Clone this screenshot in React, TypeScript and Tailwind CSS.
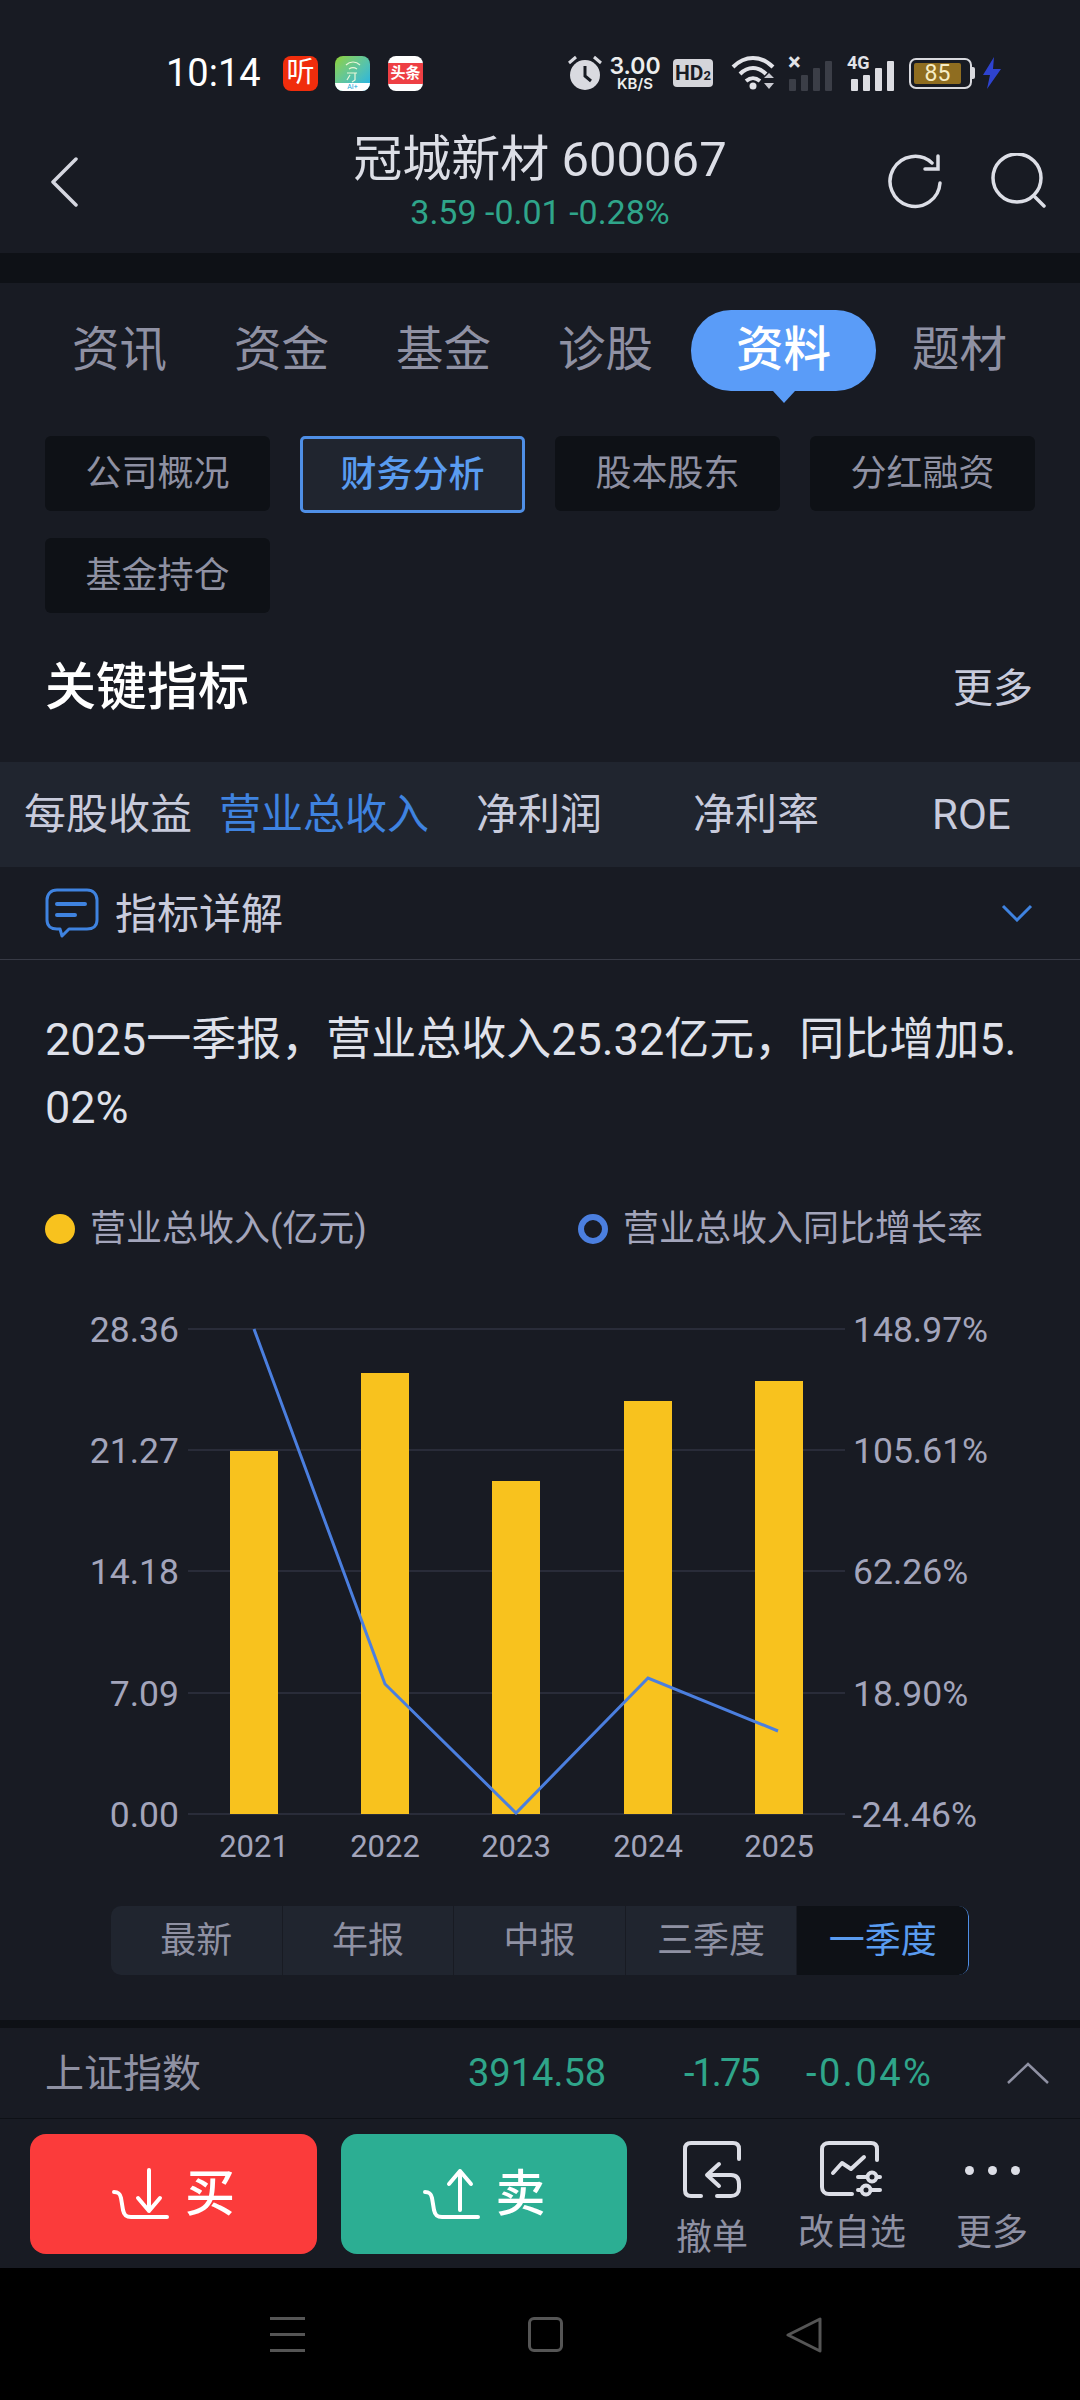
import React from 'react';

const cjk = "font-['Roboto','Noto_Sans_CJK_SC',sans-serif]";

// --- chart data, in page pixels relative to the chart box (top = 1289) ---
const TOP = 1289;
const gridLines = [1329, 1450, 1571, 1693, 1814];
const leftLabels = ['28.36', '21.27', '14.18', '7.09', '0.00'];
const rightLabels = ['148.97%', '105.61%', '62.26%', '18.90%', '-24.46%'];
const bars = [
  { x: 230, top: 1451, year: '2021' },
  { x: 361, top: 1373, year: '2022' },
  { x: 492, top: 1481, year: '2023' },
  { x: 624, top: 1401, year: '2024' },
  { x: 755, top: 1381, year: '2025' },
];
const linePoints = [
  [254, 1329],
  [385, 1684],
  [516, 1813],
  [648, 1678],
  [778, 1731],
];

const Chart: React.FC = () => (
  <svg width="1080" height="576" viewBox={`0 ${TOP} 1080 576`} className="mt-[42px] block shrink-0" fontFamily="Roboto, sans-serif">
    {gridLines.map((y) => (
      <line key={y} x1="188" x2="845" y1={y} y2={y} stroke="#292c39" strokeWidth="2" />
    ))}
    {bars.map((b) => (
      <rect key={b.year} x={b.x} y={b.top} width="48" height={1814 - b.top} fill="#f8c21e" />
    ))}
    <polyline
      points={linePoints.map((p) => p.join(',')).join(' ')}
      fill="none"
      stroke="#4b7fdf"
      strokeWidth="3"
    />
    {leftLabels.map((t, i) => (
      <text key={t} x="179" y={gridLines[i] + 13} textAnchor="end" fontSize="35.5" fill="#a3a5bb">{t}</text>
    ))}
    {rightLabels.map((t, i) => (
      <text key={t} x={t.startsWith('-') ? 852 : 853} y={gridLines[i] + 13} fontSize="35.5" fill="#a3a5bb">{t}</text>
    ))}
    {bars.map((b) => (
      <text key={b.year} x={b.x + 24} y="1857" textAnchor="middle" fontSize="31" fill="#a3a5bb">{b.year}</text>
    ))}
  </svg>
);

// --- status bar pieces ---
const Alarm = () => (
  <svg width="34" height="36" viewBox="0 0 34 36" className="shrink-0">
    <circle cx="17" cy="20" r="15" fill="#d9dae0" />
    <path d="M17 11v10l6 5" fill="none" stroke="#181b23" strokeWidth="3" />
    <path d="M1 8l7-6M33 8l-7-6" stroke="#d9dae0" strokeWidth="3" />
  </svg>
);

const Wifi = () => (
  <svg width="46" height="36" viewBox="0 0 46 36" className="shrink-0" fill="none" stroke="#e2e3e8" strokeWidth="4">
    <path d="M2 12C14 0 30 0 42 12" />
    <path d="M9 19c8-8 18-8 26 0" />
    <path d="M15 26c5-4 9-4 14 0" />
    <circle cx="22" cy="31" r="3.5" fill="#e2e3e8" stroke="none" />
    <path d="M33 23l5-5 5 5zM33 28l5 6 5-6z" fill="#c8c9d0" stroke="none" />
  </svg>
);

const SignalBars: React.FC<{ color: string }> = ({ color }) => (
  <div className="flex items-end gap-[5px] h-[30px]">
    {['h-[12px]', 'h-[16px]', 'h-[23px]', 'h-[30px]'].map((h) => (
      <div key={h} className={`w-[7px] rounded-[1px] ${h}`} style={{ backgroundColor: color }} />
    ))}
  </div>
);

const StatusBar = () => (
  <div className="flex items-center h-[36px] mt-[55px] pl-[166px] pr-[78px] text-white">
    <span className="text-[38px] leading-none w-[117px] font-['Roboto',sans-serif]">10:14</span>
    <div className="w-[35px] h-[35px] rounded-[8px] bg-[#f02d0c] flex items-center justify-center text-[28px] leading-none text-white">听</div>
    <div className="ml-[17px] w-[35px] h-[35px] rounded-[8px] bg-gradient-to-br from-[#8fd11f] to-[#0fb0ee] flex flex-col items-center justify-end overflow-hidden">
      <svg width="20" height="24" viewBox="0 0 20 24" fill="none" stroke="#e8f7d8" strokeWidth="1.2">
        <path d="M3 6c4-4 10-4 14 0M6 10c3-2 5-2 8 0M4 14h10M12 14v7l-3 2M7 16l-3 5" />
      </svg>
      <div className="w-full h-[8px] bg-white text-[7px] leading-[8px] text-center text-[#11a7d8]">AI+</div>
    </div>
    <div className="ml-[18px] w-[35px] h-[35px] rounded-[8px] bg-white flex items-center overflow-hidden">
      <div className="w-full h-[21px] bg-[#ee3f44] text-[15px] leading-[21px] text-center text-white font-bold">头条</div>
    </div>

    <div className="ml-auto flex items-center">
      <Alarm />
      <div className="ml-[6px] w-[54px] flex flex-col items-center font-['Inter',sans-serif] font-semibold text-[#eceded]">
        <span className="text-[23px] leading-[21px]">3.00</span>
        <span className="text-[15px] leading-[14px]">KB/S</span>
      </div>
      <div className="ml-[11px] w-[40px] h-[28px] rounded-[4px] bg-[#d4d5da] flex items-center justify-center text-[#181b23] font-['Roboto',sans-serif] font-bold text-[21px] leading-none">
        HD<span className="text-[13px] mt-[5px]">2</span>
      </div>
      <div className="ml-[18px]"><Wifi /></div>
      <div className="relative ml-[12px] pt-[6px]">
        <SignalBars color="#3b3e47" />
        <span className="absolute left-[-1px] top-[-5px] text-[24px] leading-none font-bold text-[#e2e3e8]">×</span>
      </div>
      <div className="ml-[15px] flex items-end h-[36px] relative w-[47px] justify-end">
        <span className="absolute left-0 top-[-1px] text-[18px] leading-none font-bold font-['Roboto',sans-serif] text-[#e2e3e8]">4G</span>
        <SignalBars color="#dcdde2" />
      </div>
      <div className="ml-[15px] flex items-center">
        <div className="w-[63px] h-[31px] rounded-[7px] border-2 border-[#d8d9de] p-[3px]">
          <div className="w-[47px] h-full bg-[#8f6d20] rounded-[2px] flex items-center justify-center text-[#f6ecc4] text-[23px] leading-none font-['Roboto',sans-serif]">85</div>
        </div>
        <div className="w-[3px] h-[12px] bg-[#d8d9de] rounded-r-[2px]" />
      </div>
      <svg width="20" height="32" viewBox="0 0 20 32" className="ml-[7px]">
        <path d="M12 0L1 18h7L5 32l14-20h-8z" fill="#2e43cf" />
      </svg>
    </div>
  </div>
);

const NavBar = () => (
  <div className="flex items-start mt-[44px]">
    <div className="w-[260px] pl-[50px] pt-[22px]">
      <svg width="28" height="50" viewBox="0 0 28 50" fill="none" stroke="#d5d7e0" strokeWidth="3.5" strokeLinecap="round" strokeLinejoin="round">
        <path d="M26 2L3 25l23 23" />
      </svg>
    </div>
    <div className="flex-1 flex flex-col items-center">
      <div className="text-[49px] leading-[50px] text-[#dcdee6] whitespace-nowrap">冠城新材 600067</div>
      <div className="mt-[9px] text-[34px] leading-[36px] text-[#2fa58a] font-['Roboto',sans-serif] whitespace-nowrap">3.59 -0.01 -0.28%</div>
    </div>
    <div className="w-[260px] flex justify-end pr-[34px] pt-[18px] gap-[46px]">
      <svg width="56" height="56" viewBox="0 0 56 56" fill="none" stroke="#dcdee6" strokeWidth="3.5" strokeLinecap="round">
        <path d="M52 30a25 25 0 1 1-8-20" />
        <path d="M50 3v13H37" />
      </svg>
      <svg width="56" height="56" viewBox="0 0 56 56" fill="none" stroke="#dcdee6" strokeWidth="3.5" strokeLinecap="round">
        <circle cx="27" cy="25" r="24" />
        <path d="M45 44l9 9" />
      </svg>
    </div>
  </div>
);

const SubTab: React.FC<{ label: string; active?: boolean }> = ({ label, active }) => (
  <div
    className={
      active
        ? 'h-[77px] rounded-[5px] border-[3px] border-[#4f8fe6] bg-[#20252f] flex items-center justify-center text-[36px] font-medium text-[#5a9cf0]'
        : 'h-[75px] rounded-[6px] bg-[#0e1116] flex items-center justify-center text-[36px] text-[#8f91a3]'
    }
  >
    {label}
  </div>
);

const BuyIcon: React.FC<{ up?: boolean }> = ({ up }) => (
  <svg width="58" height="52" viewBox="0 0 58 52" fill="none" stroke="#fff" strokeWidth="4" strokeLinecap="round" strokeLinejoin="round">
    <path d="M2 24c4 0 6 1 7 6l2 12c1 5 3 7 8 7h36" />
    {up ? <path d="M37 42V3M26 16L37 3l11 13" /> : <path d="M37 2v41M26 30l11 13 11-13" />}
  </svg>
);

const periods = ['最新', '年报', '中报', '三季度', '一季度'];

const App: React.FC = () => {
  return (
    <div className={`w-[1080px] h-[2400px] overflow-hidden flex flex-col bg-[#181b23] ${cjk}`}>
      <header className="h-[253px] shrink-0">
        <StatusBar />
        <NavBar />
      </header>
      <div className="h-[30px] shrink-0 bg-[#0e1116]" />

      {/* top tabs */}
      <div className="flex items-center h-[81px] mt-[27px] pl-[72px] text-[47.5px] text-[#8f91a3] shrink-0">
        <span>资讯</span>
        <span className="ml-[67px]">资金</span>
        <span className="ml-[67px]">基金</span>
        <span className="ml-[67px]">诊股</span>
        <div className="relative ml-[38px] w-[185px] h-[81px] rounded-[40px] bg-[#5a9cf8] flex items-center justify-center text-white font-medium">
          资料
          <div className="absolute left-1/2 -translate-x-1/2 top-full w-0 h-0 border-x-[11px] border-x-transparent border-t-[12px] border-t-[#5a9cf8]" />
        </div>
        <span className="ml-[36px]">题材</span>
      </div>

      {/* sub tabs */}
      <div className="grid grid-cols-4 items-start gap-x-[30px] gap-y-[25px] mt-[45px] px-[45px] shrink-0">
        <SubTab label="公司概况" />
        <SubTab label="财务分析" active />
        <SubTab label="股本股东" />
        <SubTab label="分红融资" />
        <SubTab label="基金持仓" />
      </div>

      <div className="h-[149px] shrink-0 flex items-center justify-between pt-[2px] pl-[45px] pr-[47px]">
        <span className="text-[51px] font-medium text-white">关键指标</span>
        <span className="text-[40px] text-[#c8cbdc]">更多</span>
      </div>

      {/* metric tabs */}
      <div className="h-[105px] shrink-0 bg-[#20252f] flex items-center pl-[24px] text-[42px] text-[#c8cbdc] whitespace-nowrap">
        <span>每股收益</span>
        <span className="ml-[27px] text-[#3f83e0]">营业总收入</span>
        <span className="ml-[47px]">净利润</span>
        <span className="ml-[91px]">净利率</span>
        <span className="ml-[113px] font-['Roboto',sans-serif]">ROE</span>
      </div>

      <div className="h-[93px] shrink-0 border-b border-[#373a45] flex items-center pl-[45px] pr-[47px]">
        <svg width="54" height="50" viewBox="0 0 54 50" fill="none" stroke="#3f83e0" strokeWidth="3" strokeLinecap="round" strokeLinejoin="round">
          <path d="M12 2h30c6 0 10 4 10 10v20c0 6-4 9-10 9H24l-7 7-2-7h-3C6 41 2 38 2 32V12C2 6 6 2 12 2z" />
          <path d="M12 16h28M12 27h18" strokeWidth="4" />
        </svg>
        <span className="ml-[16px] pt-[2px] text-[42px] text-[#c8cbdc]">指标详解</span>
        <svg width="32" height="18" viewBox="0 0 32 18" fill="none" stroke="#3f83e0" strokeWidth="3" className="ml-auto">
          <path d="M2 2l14 14L30 2" />
        </svg>
      </div>

      <p className="mt-[46px] px-[45px] text-[45px] leading-[68px] text-[#dfe1ea] break-all shrink-0">
        2025一季报，营业总收入25.32亿元，同比增加5.02%
      </p>

      {/* legend */}
      <div className="flex items-center h-[36px] mt-[69px] pl-[45px] text-[36px] text-[#a3a5bb] shrink-0">
        <div className="w-[30px] h-[30px] rounded-full bg-[#f8c21e]" />
        <span className="ml-[15px] w-[488px]">营业总收入(亿元)</span>
        <div className="w-[30px] h-[30px] rounded-full border-[6px] border-[#4b7fdf]" />
        <span className="ml-[15px]">营业总收入同比增长率</span>
      </div>

      <Chart />

      {/* period switch */}
      <div className="flex h-[69px] w-[858px] ml-[111px] mt-[41px] rounded-[10px] overflow-hidden shrink-0 text-[36px]">
        {periods.map((p, i) => (
          <div
            key={p}
            className={
              i === 4
                ? 'flex-1 flex items-center justify-center bg-[#0e1116] text-[#5a9cf0] border-r border-[#4f8fe6] rounded-r-[10px]'
                : 'flex-1 flex items-center justify-center bg-[#20252f] text-[#8f91a3] border-r border-[#181b23]'
            }
          >
            {p}
          </div>
        ))}
      </div>

      <div className="h-[8px] mt-[45px] bg-[#0e1116] shrink-0" />

      {/* index row */}
      <div className="h-[91px] shrink-0 border-b border-[#0e1116] flex items-center text-[38px] text-[#2fa58a] whitespace-nowrap">
        <span className="w-[468px] pl-[45px] pt-[3px] text-[39px] text-[#8f91a3]">上证指数</span>
        <span className="w-[216px]">3914.58</span>
        <span className="w-[122px] tracking-[-2px]">-1.75</span>
        <span className="w-[201px] tracking-[2.5px]">-0.04%</span>
        <svg width="42" height="22" viewBox="0 0 42 22" fill="none" stroke="#8f91a3" strokeWidth="2.5">
          <path d="M1 21L21 2l20 19" />
        </svg>
      </div>

      {/* bottom actions */}
      <div className="h-[149px] shrink-0 flex items-start pt-[15px] pl-[30px]">
        <button type="button" className="w-[287px] h-[120px] rounded-[16px] bg-[#fb3b3b] flex items-center justify-center gap-[15px] text-white text-[50px] font-medium">
          <BuyIcon />
          买
        </button>
        <button type="button" className="ml-[24px] w-[286px] h-[120px] rounded-[16px] bg-[#2cae93] flex items-center justify-center gap-[15px] text-white text-[50px] font-medium">
          <BuyIcon up />
          卖
        </button>
        <div className="ml-[15px] flex pt-[7px] text-[36px] leading-[36px] text-[#8f91a3]">
          <div className="w-[140px] flex flex-col items-center">
            <svg width="58" height="58" viewBox="0 0 58 58" fill="none" stroke="#dcdee6" strokeWidth="4" strokeLinecap="round" strokeLinejoin="round">
              <path d="M18 55H8c-4 0-6-2-6-6V8c0-4 2-6 6-6h42c4 0 6 2 6 6v10" />
              <path d="M34 55h14c5 0 8-3 8-8v-4c0-6-3-9-8-9H26" />
              <path d="M36 23L24 34l12 11" />
            </svg>
            <span className="mt-[21px]">撤单</span>
          </div>
          <div className="w-[140px] flex flex-col items-center">
            <svg width="64" height="58" viewBox="0 0 64 58" fill="none" stroke="#dcdee6" strokeWidth="4" strokeLinecap="round" strokeLinejoin="round">
              <path d="M32 53H9c-4 0-7-3-7-7V8c0-4 3-6 7-6h42c4 0 6 2 6 6v11" />
              <path d="M13 32l9-10 9 6 13-12" />
              <path d="M38 36h22M38 49h22" />
              <circle cx="52" cy="36" r="4.5" fill="#181b23" />
              <circle cx="46" cy="49" r="4.5" fill="#181b23" />
            </svg>
            <span className="mt-[16px]">改自选</span>
          </div>
          <div className="w-[140px] flex flex-col items-center">
            <div className="h-[58px] flex items-center justify-center gap-[14px]">
              <div className="w-[9px] h-[9px] rounded-full bg-[#dcdee6]" />
              <div className="w-[9px] h-[9px] rounded-full bg-[#dcdee6]" />
              <div className="w-[9px] h-[9px] rounded-full bg-[#dcdee6]" />
            </div>
            <span className="mt-[16px]">更多</span>
          </div>
        </div>
      </div>

      {/* android nav */}
      <div className="flex-1 bg-black flex items-start pt-[49px] pl-[270px]">
        <div className="w-[35px] h-[35px] flex flex-col justify-between">
          <div className="h-[3px] bg-[#555]" />
          <div className="h-[3px] bg-[#555]" />
          <div className="h-[3px] bg-[#555]" />
        </div>
        <div className="ml-[223px] w-[35px] h-[35px] rounded-[6px] border-[3px] border-[#555]" />
        <svg width="36" height="36" viewBox="0 0 36 36" fill="none" stroke="#555" strokeWidth="3" strokeLinejoin="round" className="ml-[223px]">
          <path d="M34 2v32L2 18z" />
        </svg>
      </div>
    </div>
  );
};

export default App;
